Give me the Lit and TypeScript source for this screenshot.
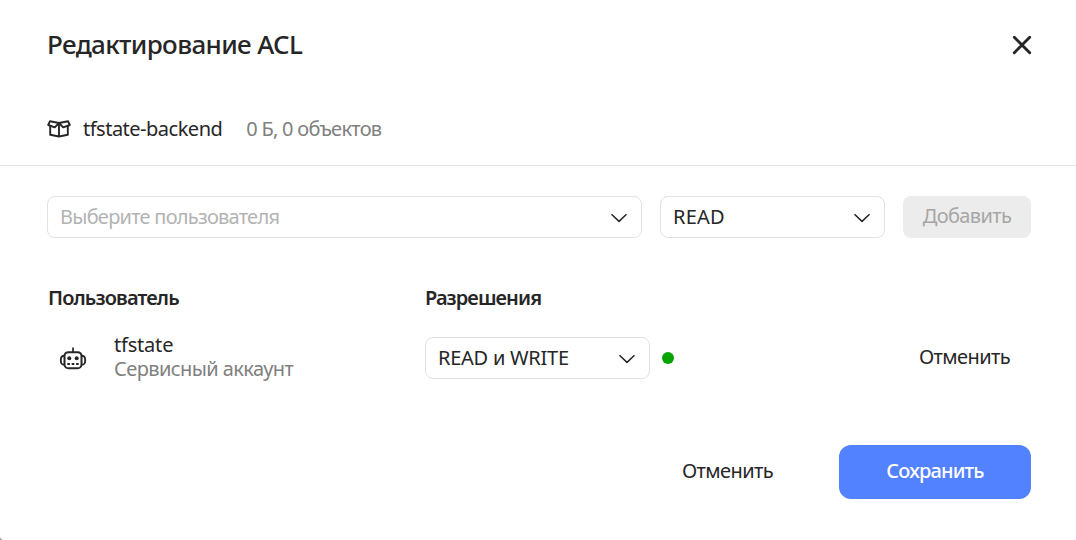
import { LitElement, html, css, svg } from "lit";

const chevron = html`<svg class="chevron" width="18" height="10" viewBox="0 0 18 10">
  <path d="M1.500 1.200 9 8.400l7.500-7.200" fill="none" stroke="#262626" stroke-width="1.5" />
</svg>`;

const boxIcon = html`<svg width="24" height="20" viewBox="0 0 24 20">
  <g fill="none" stroke="#262626" stroke-width="1.9" stroke-linejoin="round">
    <path d="M12 4 3 2.200 1.200 6l6.600 2.400Z" />
    <path d="M12 4 21 2.200 22.800 6l-6.600 2.400Z" />
    <path d="M3.200 6.800v9l8.800 1.700 8.800-1.700v-9" />
    <path d="M12 4v13.500" />
  </g>
</svg>`;

const robotIcon = html`<svg width="28" height="24" viewBox="0 0 28 24">
  <g fill="none" stroke="#262626" stroke-width="2">
    <rect x="5.500" y="5.200" width="17" height="16" rx="3.800" />
    <path d="M14 .5v5" stroke-width="1.700" />
    <path d="M5.500 8.800C2.500 8.800 1.800 10 1.800 13.300S2.500 17.800 5.500 17.800M22.500 8.800c3 0 3.700 1.200 3.700 4.500S25.500 17.800 22.500 17.800" stroke-width="1.900" />
  </g>
  <g fill="#262626">
    <circle cx="10.300" cy="11.300" r="2" /><circle cx="17.700" cy="11.300" r="2" />
    ${[8.3, 12.7, 17.1].map((x) => svg`<rect x=${x} y="16" width="2.600" height="2" />`)}
  </g>
</svg>`;

class AppRoot extends LitElement {
  static styles = css`
    :host { display: block; height: 540px; background: #999; color: #262626;
      font: 400 20px/24px "Noto Sans", sans-serif; }
    * { box-sizing: border-box; }
    svg { display: block; flex: none; }
    .dialog { height: 540px; background: #fff; border-bottom-left-radius: 4px; overflow: hidden; white-space: nowrap; }
    .head { height: 88px; padding: 0 44px 0 47px; display: flex; justify-content: space-between; align-items: center; }
    .title { font-size: 26px; line-height: 32px; font-weight: 500; letter-spacing: -0.63px; }
    .close { margin-top: 2px; }
    .bucket { height: 78px; padding: 4px 47px 0; display: flex; align-items: center; border-bottom: 1px solid #e5e5e5; }
    .bucket-name { margin-left: 12px; letter-spacing: -0.5px; }
    .bucket-info { margin-left: 24px; color: #808080; letter-spacing: -0.74px; }
    .add { margin: 30px 45px 0 47px; display: grid; grid-template-columns: 595px 225px 128px; gap: 18px; }
    .select { height: 42px; border: 1px solid #e2e2e2; border-radius: 8px; padding: 0 13px 0 12px;
      display: flex; align-items: center; justify-content: space-between; }
    .chevron { margin-top: 2px; }
    .placeholder { color: #b3b3b3; letter-spacing: -0.75px; }
    .read { letter-spacing: 0.2px; }
    .rw { letter-spacing: -0.25px; }
    .button { display: flex; align-items: center; justify-content: center; }
    .disabled { border-radius: 8px; background: #ececec; color: #a6a6a6; letter-spacing: -0.63px; padding-bottom: 2px; }
    .table { margin: 47px 45px 0 47px; display: grid; grid-template-columns: 378px 1fr auto; }
    .th { height: 52px; padding-top: 1px; font-weight: 600; letter-spacing: -0.92px; }
    .th-user { padding-left: 1px; letter-spacing: -0.85px; }
    .user { height: 42px; display: flex; align-items: center; padding-left: 12px; }
    .robot { padding-top: 2px; }
    .who { margin-left: 27px; padding-bottom: 2px; }
    .name { letter-spacing: -0.2px; }
    .kind { color: #808080; letter-spacing: -0.59px; }
    .perm { display: flex; align-items: center; gap: 12px; }
    .perm .select { width: 225px; }
    .dot { width: 12px; height: 12px; border-radius: 50%; background: #07a300; }
    .text-button { letter-spacing: -0.6px; }
    .row-cancel { padding: 0 21px 2px 0; }
    .foot { margin: 66px 45px 0 0; display: flex; justify-content: flex-end; gap: 66px; height: 54px; }
    .foot .button { padding-bottom: 2px; }
    .save { width: 192px; border-radius: 12px; background: #5282ff; color: #fff; font-weight: 500; letter-spacing: -0.82px; }
  `;

  render() {
    return html`<div class="dialog">
      <div class="head">
        <div class="title">Редактирование ACL</div>
        <svg class="close" width="20" height="20" viewBox="0 0 20 20">
          <path d="M2.300 2.300l15.400 15.400M17.700 2.300 2.300 17.700" stroke="#262626" stroke-width="2.900" stroke-linecap="round" />
        </svg>
      </div>
      <div class="bucket">
        ${boxIcon}<span class="bucket-name">tfstate-backend</span><span class="bucket-info">0 Б, 0 объектов</span>
      </div>
      <div class="add">
        <div class="select"><span class="placeholder">Выберите пользователя</span>${chevron}</div>
        <div class="select"><span class="read">READ</span>${chevron}</div>
        <div class="button disabled">Добавить</div>
      </div>
      <div class="table">
        <div class="th th-user">Пользователь</div><div class="th">Разрешения</div><div></div>
        <div class="user"><div class="robot">${robotIcon}</div>
          <div class="who"><div class="name">tfstate</div><div class="kind">Сервисный аккаунт</div></div>
        </div>
        <div class="perm"><div class="select"><span class="rw">READ и WRITE</span>${chevron}</div><span class="dot"></span></div>
        <div class="button text-button row-cancel">Отменить</div>
      </div>
      <div class="foot">
        <div class="button text-button">Отменить</div>
        <div class="button save">Сохранить</div>
      </div>
    </div>`;
  }
}
customElements.define("app-root", AppRoot);
